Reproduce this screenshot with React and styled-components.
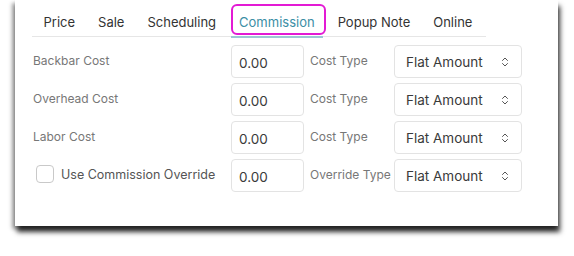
import React from "react";
import styled, { createGlobalStyle } from "styled-components";
import { ChevronsUpDown } from "lucide-react";

const Global = createGlobalStyle`
  html, body { margin: 0; padding: 0; background: #fff; }
  body { font-family: Inter, "Noto Sans", sans-serif; }
  * { box-sizing: border-box; }
`;

const Page = styled.div`
  width: 574px;
  height: 256px;
  padding-left: 15px;
  overflow: hidden;
`;

const Card = styled.div`
  width: 543px;
  height: 226px;
  background: #fff;
  padding-left: 17px;
  box-shadow: 2px 6px 5px rgba(0, 0, 0, 0.8), -3px 3px 4px rgba(0, 0, 0, 0.35);
`;

const TabBar = styled.div`
  display: flex;
  width: 454px;
  height: 37px;
  padding-top: 5px;
  border-bottom: 1px solid #e6e6e6;
`;

const Tab = styled.div`
  position: relative;
  display: flex;
  align-items: center;
  padding: 2px 11.5px 0;
  font-size: 13px;
  color: ${(p) => (p.$active ? "#3b8ea5" : "#333")};
  &::before {
    content: "";
    display: ${(p) => (p.$active ? "block" : "none")};
    position: absolute;
    left: 3px;
    right: 0;
    top: -1px;
    bottom: 1px;
    border: 2px solid #e31ad4;
    border-radius: 6px;
  }
  &::after {
    content: "";
    display: ${(p) => (p.$active ? "block" : "none")};
    position: absolute;
    left: 3px;
    right: 3px;
    bottom: -2px;
    height: 2px;
    background: #9cc8d4;
  }
`;

const Form = styled.div`
  display: grid;
  grid-template-columns: 198px 73px 90px 128px;
  grid-auto-rows: 33px;
  row-gap: 5px;
  margin-top: 8px;
  padding-left: 1px;
`;

const Label = styled.div`
  display: flex;
  align-items: center;
  padding-bottom: 2px;
  font-size: 12px;
  color: #777;
  padding-left: ${(p) => (p.$indent ? "6px" : "0")};
`;

const CheckRow = styled.label`
  display: flex;
  align-items: center;
  gap: 7px;
  padding-left: 3px;
  padding-bottom: 3px;
  font-size: 12.5px;
  color: #555;
`;

const Box = styled.span`
  width: 18px;
  height: 18px;
  border: 1px solid #c9c9c9;
  border-radius: 4px;
  background: #fff;
`;

const Input = styled.div`
  display: flex;
  align-items: center;
  padding: 3px 7px 0;
  border: 1px solid #e3e3e3;
  border-radius: 4px;
  font-size: 13.5px;
  color: #3a3a3a;
`;

const Select = styled.div`
  display: flex;
  align-items: center;
  justify-content: space-between;
  padding: 1px 10px 0 11px;
  border: 1px solid #e3e3e3;
  border-radius: 4px;
  font-size: 13.5px;
  color: #3a3a3a;
  svg { color: #555; }
`;

const tabs = ["Price", "Sale", "Scheduling", "Commission", "Popup Note", "Online"];
const rows = [
  { label: "Backbar Cost", type: "Cost Type" },
  { label: "Overhead Cost", type: "Cost Type" },
  { label: "Labor Cost", type: "Cost Type" },
  { check: "Use Commission Override", type: "Override Type" },
];

export default function App() {
  return (
    <Page>
      <Global />
      <Card>
        <TabBar>
          {tabs.map((t) => (
            <Tab key={t} $active={t === "Commission"}>{t}</Tab>
          ))}
        </TabBar>
        <Form>
          {rows.map((r, i) => (
            <React.Fragment key={i}>
              {r.check ? (
                <CheckRow>
                  <Box />
                  {r.check}
                </CheckRow>
              ) : (
                <Label>{r.label}</Label>
              )}
              <Input>0.00</Input>
              <Label $indent>{r.type}</Label>
              <Select>
                Flat Amount
                <ChevronsUpDown size={12} strokeWidth={2} />
              </Select>
            </React.Fragment>
          ))}
        </Form>
      </Card>
    </Page>
  );
}
